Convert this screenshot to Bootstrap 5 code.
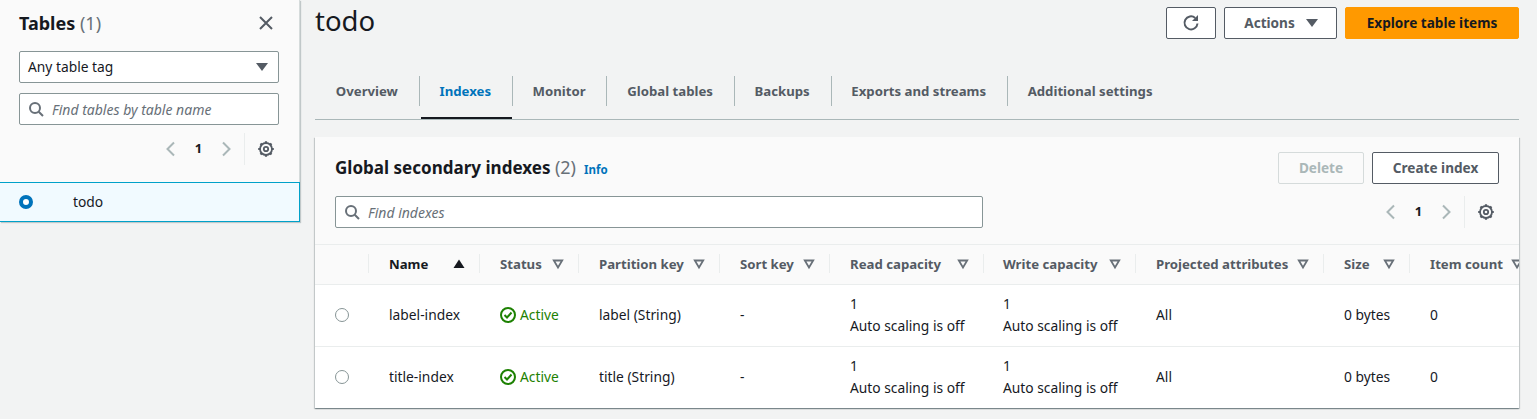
<!doctype html>
<html lang="en">
<head>
<meta charset="utf-8">
<meta name="viewport" content="width=device-width, initial-scale=1">
<title>todo</title>
<link href="https://cdn.jsdelivr.net/npm/bootstrap@5.3.3/dist/css/bootstrap.min.css" rel="stylesheet">
<style>
  body {
    background-color: #f2f3f3;
    color: #16191f;
    font-family: "Noto Sans", sans-serif;
    font-size: 13.8px;
    height: 419px;
    overflow: hidden;
  }
  .shell { height: 419px; }

  /* side panel */
  .side-panel {
    width: 300px;
    height: 222px;
    flex: none;
    background-color: #fafafa;
    border-right: 1px solid #d5dbdb;
    box-shadow: 1px 1px 1px rgba(0, 28, 36, .2);
  }
  .side-top { padding: 9px 20px 0 19px; }
  .side-title { font-size: 18px; font-weight: 700; line-height: 28px; margin: 0; }
  .side-title span, .card-title-text span { color: #687078; font-weight: 400; }
  .card-title-text span { font-size: 18px; line-height: 1; }
  .close-btn { line-height: 0; margin-right: 5px; }
  .aws-select {
    height: 32px;
    margin-top: 14px;
    padding: 0 10px 0 8px;
    background-color: #fff;
    border: 1px solid #879596;
    border-radius: 2px;
  }
  .caret-down {
    width: 0; height: 0;
    border-left: 6px solid transparent;
    border-right: 6px solid transparent;
    border-top: 8px solid #545b64;
  }
  .aws-search {
    height: 32px;
    padding: 0 8px;
    gap: 8px;
    background-color: #fff;
    border: 1px solid #879596;
    border-radius: 2px;
    font-size: 14px;
    font-style: italic;
    color: #687078;
  }
  .aws-search svg { color: #687078; }
  .side-search { margin-top: 10px; }
  .pager { color: #16191f; font-weight: 700; font-size: 13px; padding-right: 4px; }
  .pager-num { width: 39px; text-align: center; }
  .pager-arrow { color: #aab7b8; }
  .pager-gear { color: #545b64; }
  .pager-line { width: 1px; height: 32px; background-color: #eaeded; margin: 0 12px 0 10px; }
  .side-pager { margin-top: 8px; }
  .table-pick {
    height: 40px;
    margin-top: 17px;
    margin-right: -1px;
    padding: 1px 0 0 19px;
    background-color: #f1faff;
    border: 1px solid #00a1c9;
    border-left: 0;
  }
  .dot-on {
    width: 14px; height: 14px;
    border-radius: 50%;
    border: 4px solid #0073bb;
    background-color: #fff;
    margin-right: 40px;
    margin-top: -1px;
  }

  /* main */
  .main-area { padding: 0 18px 0 15px; min-width: 0; }
  .page-top { height: 46px; }
  .page-name { font-size: 27.5px; font-weight: 400; line-height: 42px; margin: 0; }
  .aws-btn {
    height: 32px;
    padding: 0;
    background-color: #fff;
    border: 1px solid #545b64;
    border-radius: 2px;
    color: #545b64;
    font-family: inherit;
    font-size: 13.6px;
    font-weight: 700;
    line-height: 30px;
  }
  .aws-btn.btn-primary-aws { background-color: #ff9900; border-color: #ff9900; color: #16191f; }
  .aws-btn.btn-off { border-color: #d5dbdb; color: #aab7b8; background-color: #fafafa; }
  .btn-refresh { width: 50px; line-height: 0; }
  .btn-actions { width: 113px; gap: 11px; padding-left: 1px; }
  .btn-explore { width: 174px; }
  .btn-delete { width: 86px; }
  .btn-create { width: 127px; }
  .top-btns { margin-top: 7px; }

  .tab-bar { height: 74px; padding-top: 27px; border-bottom: 1px solid #aab7b8; margin: 0; }
  .tab-item {
    height: 46px;
    padding: 0 20.8px;
    color: #545b64;
    font-weight: 700;
    font-size: 13.2px;
    line-height: 36px;
    position: relative;
  }
  .tab-item + .tab-item::before {
    content: "";
    position: absolute;
    left: 0; top: 3px;
    width: 1px; height: 30px;
    background-color: #aab7b8;
  }
  .tab-item.tab-on { color: #0073bb; }
  .tab-item.tab-on::after {
    content: "";
    position: absolute;
    left: 2px; right: 0; bottom: 0;
    height: 2px;
    background-color: #16191f;
  }

  .index-card {
    margin-top: 17px;
    height: 271px;
    border: 0;
    border-radius: 0;
    overflow: hidden;
    background-color: #fff;
    box-shadow: 0 1px 1px 0 rgba(0, 28, 36, .3), 1px 1px 1px 0 rgba(0, 28, 36, .15), -1px 1px 1px 0 rgba(0, 28, 36, .15);
  }
  .card-head { height: 108px; background-color: #fafafa; border-bottom: 1px solid #eaeded; padding: 15px 20px 0; }
  .card-title-text { font-size: 17.05px; font-weight: 700; line-height: 32px; margin: 0; }
  .info-link { color: #0073bb; font-size: 11.5px; font-weight: 700; text-decoration: none; margin-left: 8px; padding-top: 3px; }
  .card-search { width: 648px; }
  .head-row-1 { height: 32px; }
  .head-row-2 { margin-top: 12px; }

  .index-table { table-layout: fixed; width: 1310px; margin: 0; border-collapse: collapse; }
  .index-table th {
    height: 39px;
    padding: 2px 0 0 21px;
    background-color: #fafafa;
    border-bottom: 1px solid #eaeded;
    color: #545b64;
    font-size: 13.2px;
    font-weight: 700;
    position: relative;
    white-space: nowrap;
    vertical-align: middle;
  }
  .index-table th.sorted { color: #16191f; }
  .index-table th + th::before {
    content: "";
    position: absolute;
    left: 0; top: 9px;
    width: 1px; height: 19px;
    background-color: #eaeded;
  }
  .index-table td {
    height: 62px;
    padding: 0 0 0 21px;
    border-bottom: 1px solid #eaeded;
    color: #16191f;
    vertical-align: middle;
    white-space: nowrap;
    line-height: 22px;
  }
  .index-table tr:last-child td { border-bottom: 0; }
  .index-table td:first-child, .index-table th:first-child { padding-left: 20px; }
  .index-table td.c-write-cell, .index-table th.c-write { padding-left: 20px; }
  .th-in { display: flex; justify-content: space-between; align-items: center; padding-right: 14px; }
  .th-in svg { margin-top: -2px; color: #687078; }
  .c-sel { width: 53px; }
  .c-name { width: 111px; }
  .c-status { width: 99px; }
  .c-part { width: 141px; }
  .c-sort { width: 110px; }
  .c-read { width: 154px; }
  .c-write { width: 152px; }
  .c-proj { width: 188px; }
  .c-size { width: 86px; }
  .c-count { width: 216px; }
  .dot-off {
    display: block;
    width: 14px; height: 14px;
    border-radius: 50%;
    border: 1px solid #879596;
    background-color: #fff;
  }
  .status-on { color: #1d8102; gap: 4px; }
</style>
</head>
<body>
<svg width="0" height="0" class="position-absolute">
  <symbol id="ic-search" viewBox="0 0 16 16"><circle cx="7" cy="7" r="5" fill="none" stroke="currentColor" stroke-width="2"/><path d="M10.7 10.7L15 15" fill="none" stroke="currentColor" stroke-width="2"/></symbol>
  <symbol id="ic-left" viewBox="0 0 16 16"><path d="M11 1.500L4.500 8l6.500 6.500" fill="none" stroke="currentColor" stroke-width="2"/></symbol>
  <symbol id="ic-right" viewBox="0 0 16 16"><path d="M5 1.500L11.500 8 5 14.500" fill="none" stroke="currentColor" stroke-width="2"/></symbol>
  <symbol id="ic-gear" viewBox="0 0 18 18">
    <circle cx="9" cy="9" r="2.200" fill="none" stroke="currentColor" stroke-width="1.800"/>
    <circle cx="9" cy="9" r="6" fill="none" stroke="currentColor" stroke-width="1.800"/>
    <path d="M9 1.200v2M9 14.800v2M1.200 9h2M14.800 9h2M3.500 3.500l1.400 1.400M13.100 13.100l1.400 1.400M14.500 3.500l-1.400 1.400M4.900 13.100l-1.400 1.400" fill="none" stroke="currentColor" stroke-width="2.200"/>
  </symbol>
  <symbol id="ic-filter" viewBox="0 0 12 12"><path d="M1.800 2.500h8.400L6 9.500z" fill="none" stroke="currentColor" stroke-width="1.800"/></symbol>
</svg>

<div class="shell d-flex align-items-start">
  <aside class="side-panel">
    <div class="side-top">
      <div class="d-flex justify-content-between align-items-center">
        <h2 class="side-title">Tables <span>(1)</span></h2>
        <span class="close-btn">
          <svg width="16" height="16" viewBox="0 0 16 16"><path d="M2 2l12 12M14 2L2 14" fill="none" stroke="#545b64" stroke-width="2"/></svg>
        </span>
      </div>
      <div class="aws-select d-flex justify-content-between align-items-center">
        <span>Any table tag</span><span class="caret-down"></span>
      </div>
      <div class="aws-search side-search d-flex align-items-center">
        <svg width="16" height="16"><use href="#ic-search"/></svg><span>Find tables by table name</span>
      </div>
      <div class="pager side-pager d-flex justify-content-end align-items-center">
        <svg width="16" height="16" class="pager-arrow"><use href="#ic-left"/></svg>
        <span class="pager-num">1</span>
        <svg width="16" height="16" class="pager-arrow"><use href="#ic-right"/></svg>
        <span class="pager-line"></span>
        <svg width="18" height="18" class="pager-gear"><use href="#ic-gear"/></svg>
      </div>
    </div>
    <div class="table-pick d-flex align-items-center">
      <span class="dot-on"></span><span>todo</span>
    </div>
  </aside>

  <main class="main-area flex-grow-1">
    <div class="page-top d-flex justify-content-between align-items-start">
      <h1 class="page-name">todo</h1>
      <div class="top-btns d-flex gap-2">
        <button type="button" class="aws-btn btn-refresh">
          <svg width="18" height="18" viewBox="0 0 18 18"><path d="M15.500 9.500a6.500 6.500 0 1 1-2.300-5.600" fill="none" stroke="#545b64" stroke-width="2"/><path d="M16 1v6h-6z" fill="#545b64"/></svg>
        </button>
        <button type="button" class="aws-btn btn-actions d-flex justify-content-center align-items-center">Actions <span class="caret-down"></span></button>
        <button type="button" class="aws-btn btn-primary-aws btn-explore">Explore table items</button>
      </div>
    </div>

    <ul class="nav tab-bar">
      <li class="nav-item tab-item">Overview</li>
      <li class="nav-item tab-item tab-on">Indexes</li>
      <li class="nav-item tab-item">Monitor</li>
      <li class="nav-item tab-item">Global tables</li>
      <li class="nav-item tab-item">Backups</li>
      <li class="nav-item tab-item">Exports and streams</li>
      <li class="nav-item tab-item">Additional settings</li>
    </ul>

    <section class="card index-card">
      <div class="card-head">
        <div class="head-row-1 d-flex justify-content-between align-items-center">
          <div class="d-flex align-items-center">
            <h2 class="card-title-text">Global secondary indexes <span>(2)</span></h2>
            <a class="info-link" href="#">Info</a>
          </div>
          <div class="d-flex gap-2">
            <button type="button" class="aws-btn btn-off btn-delete">Delete</button>
            <button type="button" class="aws-btn btn-create">Create index</button>
          </div>
        </div>
        <div class="head-row-2 d-flex justify-content-between align-items-center">
          <div class="aws-search card-search d-flex align-items-center">
            <svg width="16" height="16"><use href="#ic-search"/></svg><span>Find indexes</span>
          </div>
          <div class="pager d-flex align-items-center">
            <svg width="16" height="16" class="pager-arrow"><use href="#ic-left"/></svg>
            <span class="pager-num">1</span>
            <svg width="16" height="16" class="pager-arrow"><use href="#ic-right"/></svg>
            <span class="pager-line"></span>
            <svg width="18" height="18" class="pager-gear"><use href="#ic-gear"/></svg>
          </div>
        </div>
      </div>

      <table class="index-table">
        <thead>
          <tr>
            <th class="c-sel"></th>
            <th class="c-name sorted"><div class="th-in">Name <svg width="12" height="12" viewBox="0 0 12 12"><path d="M6 1.500L11.500 10H.5z" fill="#16191f"/></svg></div></th>
            <th class="c-status"><div class="th-in">Status <svg width="12" height="12"><use href="#ic-filter"/></svg></div></th>
            <th class="c-part"><div class="th-in">Partition key <svg width="12" height="12"><use href="#ic-filter"/></svg></div></th>
            <th class="c-sort"><div class="th-in">Sort key <svg width="12" height="12"><use href="#ic-filter"/></svg></div></th>
            <th class="c-read"><div class="th-in">Read capacity <svg width="12" height="12"><use href="#ic-filter"/></svg></div></th>
            <th class="c-write"><div class="th-in">Write capacity <svg width="12" height="12"><use href="#ic-filter"/></svg></div></th>
            <th class="c-proj"><div class="th-in">Projected attributes <svg width="12" height="12"><use href="#ic-filter"/></svg></div></th>
            <th class="c-size"><div class="th-in">Size <svg width="12" height="12"><use href="#ic-filter"/></svg></div></th>
            <th class="c-count"><div class="th-in justify-content-start gap-2">Item count <svg width="12" height="12"><use href="#ic-filter"/></svg></div></th>
          </tr>
        </thead>
        <tbody>
          <tr>
            <td><span class="dot-off"></span></td>
            <td>label-index</td>
            <td><div class="status-on d-flex align-items-center"><svg width="16" height="16" viewBox="0 0 16 16"><circle cx="8" cy="8" r="7" fill="none" stroke="#1d8102" stroke-width="2"/><path d="M4.500 8l2.500 2.500 4.500-5" fill="none" stroke="#1d8102" stroke-width="2"/></svg>Active</div></td>
            <td>label (String)</td>
            <td>-</td>
            <td>1<br>Auto scaling is off</td>
            <td class="c-write-cell">1<br>Auto scaling is off</td>
            <td>All</td>
            <td>0 bytes</td>
            <td>0</td>
          </tr>
          <tr>
            <td><span class="dot-off"></span></td>
            <td>title-index</td>
            <td><div class="status-on d-flex align-items-center"><svg width="16" height="16" viewBox="0 0 16 16"><circle cx="8" cy="8" r="7" fill="none" stroke="#1d8102" stroke-width="2"/><path d="M4.500 8l2.500 2.500 4.500-5" fill="none" stroke="#1d8102" stroke-width="2"/></svg>Active</div></td>
            <td>title (String)</td>
            <td>-</td>
            <td>1<br>Auto scaling is off</td>
            <td class="c-write-cell">1<br>Auto scaling is off</td>
            <td>All</td>
            <td>0 bytes</td>
            <td>0</td>
          </tr>
        </tbody>
      </table>
    </section>
  </main>
</div>
<script src="https://cdn.jsdelivr.net/npm/bootstrap@5.3.3/dist/js/bootstrap.bundle.min.js"></script>
</body>
</html>
